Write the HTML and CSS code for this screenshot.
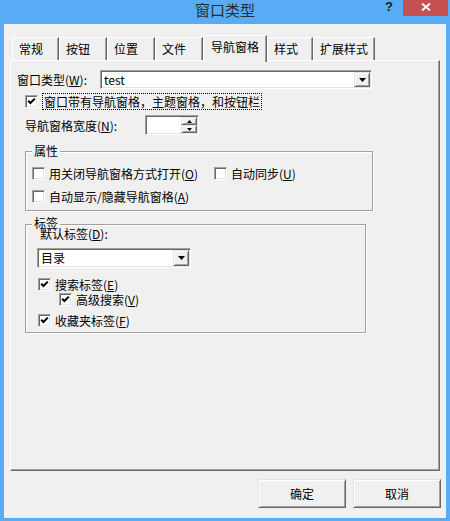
FILE: index.html
```html
<!DOCTYPE html>
<html lang="zh">
<head>
    <meta charset="UTF-8">
    <meta name="viewport" content="width=device-width, initial-scale=1.0">
    <title>窗口类型</title>
    <link rel="stylesheet" href="styles.css">
</head>
<body>

    <div class="window">
        <div class="titlebar">
            <span></span>
            <span class="title">窗口类型</span>
            <div class="caption-buttons">
                <span class="help">?</span>
                <span class="close">
                    <svg width="10" height="8" viewBox="0 0 10 8"><path d="M1 0.5 L9 7.5 M9 0.5 L1 7.5" stroke="#fff" stroke-width="1.8" fill="none"/></svg>
                </span>
            </div>
        </div>

        <div class="client">
            <div class="tabs">
                <div class="tab">常规</div>
                <div class="tab">按钮</div>
                <div class="tab">位置</div>
                <div class="tab">文件</div>
                <div class="tab active">导航窗格</div>
                <div class="tab narrow">样式</div>
                <div class="tab">扩展样式</div>
            </div>

            <div class="page">
                <div class="type-row">
                    <span class="type-label">窗口类型(<u>W</u>):</span>
                    <div class="combo type-combo">
                        <span class="combo-text">test</span>
                        <span class="drop-btn">
                            <svg width="7" height="4" viewBox="0 0 7 4"><polygon points="0,0 7,0 3.5,4" fill="#000"/></svg>
                        </span>
                    </div>
                </div>

                <div class="main-check">
                    <span class="box checked">
                        <svg width="9" height="9" viewBox="0 0 9 9"><polyline points="1.2,3.8 3.4,6 7.8,1.6" stroke="#000" stroke-width="2" fill="none"/></svg>
                    </span>
                    <span class="focus-text">窗口带有导航窗格，主题窗格，和按钮栏</span>
                </div>

                <div class="width-row">
                    <span class="width-label">导航窗格宽度(<u>N</u>):</span>
                    <div class="spin">
                        <span class="spin-btns">
                            <span class="spin-btn">
                                <svg width="5" height="3" viewBox="0 0 5 3"><polygon points="2.5,0 5,3 0,3" fill="#000"/></svg>
                            </span>
                            <span class="spin-btn">
                                <svg width="5" height="3" viewBox="0 0 5 3"><polygon points="0,0 5,0 2.5,3" fill="#000"/></svg>
                            </span>
                        </span>
                    </div>
                </div>

                <div class="group props">
                    <span class="group-title">属性</span>
                    <div class="check-line">
                        <div class="check first-col"><span class="box"></span><span>用关闭导航窗格方式打开(<u>O</u>)</span></div>
                        <div class="check"><span class="box"></span><span>自动同步(<u>U</u>)</span></div>
                    </div>
                    <div class="check-line second">
                        <div class="check"><span class="box"></span><span>自动显示/隐藏导航窗格(<u>A</u>)</span></div>
                    </div>
                </div>

                <div class="group labels">
                    <span class="group-title">标签</span>
                    <div class="default-label">默认标签(<u>D</u>):</div>
                    <div class="combo default-combo">
                        <span class="combo-text">目录</span>
                        <span class="drop-btn">
                            <svg width="7" height="4" viewBox="0 0 7 4"><polygon points="0,0 7,0 3.5,4" fill="#000"/></svg>
                        </span>
                    </div>
                    <div class="check search-check">
                        <span class="box checked"><svg width="9" height="9" viewBox="0 0 9 9"><polyline points="1.2,3.8 3.4,6 7.8,1.6" stroke="#000" stroke-width="2" fill="none"/></svg></span>
                        <span>搜索标签(<u>E</u>)</span>
                    </div>
                    <div class="check sub-check">
                        <span class="box checked"><svg width="9" height="9" viewBox="0 0 9 9"><polyline points="1.2,3.8 3.4,6 7.8,1.6" stroke="#000" stroke-width="2" fill="none"/></svg></span>
                        <span>高级搜索(<u>V</u>)</span>
                    </div>
                    <div class="check fav-check">
                        <span class="box checked"><svg width="9" height="9" viewBox="0 0 9 9"><polyline points="1.2,3.8 3.4,6 7.8,1.6" stroke="#000" stroke-width="2" fill="none"/></svg></span>
                        <span>收藏夹标签(<u>F</u>)</span>
                    </div>
                </div>
            </div>

            <div class="actions">
                <div class="btn">确定</div>
                <div class="btn">取消</div>
            </div>
        </div>
    </div>

</body>
</html>
```

FILE: styles.css
```css
body {
    margin: 0;
    width: 450px;
    height: 521px;
    overflow: hidden;
    background-color: #58acf6;
    font-family: "Noto Sans CJK SC", "Liberation Sans", sans-serif;
    font-size: 12px;
    color: #000;
}

u {
    text-decoration: underline;
    text-underline-offset: 1px;
}

.window {
    height: 521px;
    display: flex;
    flex-direction: column;
}

/* 标题栏 */
.titlebar {
    height: 24px;
    display: grid;
    grid-template-columns: 1fr auto 1fr;
}

    .titlebar .title {
        font-size: 15px;
        line-height: 20px;
        color: #2b2b2b;
    }

.caption-buttons {
    display: flex;
    justify-content: flex-end;
    align-items: flex-start;
    margin-right: 2px;
}

    .caption-buttons .help {
        font-family: "Liberation Sans", sans-serif;
        font-weight: bold;
        font-size: 13px;
        line-height: 14px;
        color: #1a1a1a;
        margin-right: 10px;
    }

    .caption-buttons .close {
        width: 45px;
        height: 16px;
        background-color: #c75050;
        display: flex;
        align-items: center;
        justify-content: center;
        padding-bottom: 3px;
        box-sizing: border-box;
    }

.client {
    flex: 1;
    margin: 0 4px 3px;
    padding: 11px 0 0 6px;
    background-color: #f0f0f0;
}

/* 选项卡 */
.tabs {
    height: 25px;
    margin-left: 2px;
    display: flex;
    align-items: flex-end;
}

.tab {
    height: 23px;
    min-width: 48px;
    box-sizing: border-box;
    padding: 0 6px;
    line-height: 21px;
    border: 1px solid;
    border-bottom: 0;
    border-color: #fff #696969 #fff #fff;
    box-shadow: inset -1px 0 #a0a0a0;
}

    .tab:first-child {
        min-width: 47px;
    }

    .tab.narrow {
        min-width: 46px;
    }

    .tab.active {
        height: 27px;
        margin-bottom: -2px;
        padding: 0 7px;
        line-height: 22px;
        position: relative;
        z-index: 1;
        background-color: #f0f0f0;
    }

.page {
    width: 430px;
    height: 411px;
    box-sizing: border-box;
    border: 1px solid;
    border-color: #fff #696969 #696969 #fff;
    box-shadow: inset -1px -1px #a0a0a0;
}

/* 凹陷输入框 */
.combo,
.spin {
    box-sizing: border-box;
    border: 1px solid;
    border-color: #a0a0a0 #fff #fff #a0a0a0;
    box-shadow: inset 1px 1px #696969, inset -1px -1px #e3e3e3;
    background-color: #fff;
    padding: 1px;
    display: flex;
    align-items: center;
}

.combo-text {
    flex: 1;
    padding-left: 2px;
    line-height: 14px;
}

.drop-btn,
.spin-btn {
    box-sizing: border-box;
    border: 1px solid;
    border-color: #e3e3e3 #696969 #696969 #e3e3e3;
    box-shadow: inset 1px 1px #fff, inset -1px -1px #a0a0a0;
    background-color: #f0f0f0;
    display: flex;
    align-items: center;
    justify-content: center;
}

.drop-btn {
    width: 16px;
    align-self: stretch;
}

.type-row {
    margin: 9px 0 0 6px;
    height: 19px;
    display: flex;
    align-items: center;
}

.type-label {
    width: 83px;
}

.type-combo {
    width: 272px;
    height: 19px;
}

.main-check {
    margin: 4px 0 0 14px;
    height: 17px;
    display: flex;
    align-items: center;
}

.focus-text {
    margin-left: 4px;
    padding: 0 1px;
    line-height: 15px;
    border: 1px dotted #000;
}

.width-row {
    margin: 5px 0 0 14px;
    height: 20px;
    display: flex;
    align-items: center;
}

.width-label {
    width: 120px;
}

.spin {
    width: 54px;
    height: 20px;
    justify-content: flex-end;
}

.spin-btns {
    width: 16px;
    height: 16px;
    display: flex;
    flex-direction: column;
}

.spin-btn {
    height: 8px;
}

/* 复选框 */
.box {
    width: 13px;
    height: 13px;
    flex: none;
    box-sizing: border-box;
    border: 1px solid;
    border-color: #a0a0a0 #fff #fff #a0a0a0;
    box-shadow: inset 1px 1px #696969, inset -1px -1px #e3e3e3;
    background-color: #fff;
    display: flex;
    align-items: center;
    justify-content: center;
}

.check {
    height: 13px;
    line-height: 13px;
    display: flex;
    align-items: center;
    gap: 4px;
    white-space: nowrap;
}

/* 分组框 */
.group {
    position: relative;
    box-sizing: border-box;
    border: 1px solid #a0a0a0;
    box-shadow: inset 1px 1px #fff, 1px 1px #fff;
}

.group-title {
    position: absolute;
    left: 6px;
    padding: 0 2px;
    line-height: 12px;
    background-color: #f0f0f0;
}

.props {
    margin: 16px 0 0 14px;
    width: 348px;
    padding: 15px 0 7px 6px;
}

    .props .group-title {
        top: -7px;
    }

.check-line {
    display: flex;
}

    .check-line.second {
        margin-top: 10px;
    }

.first-col {
    width: 182px;
}

.labels {
    margin: 13px 0 0 14px;
    width: 341px;
    padding: 2px 0 5px 11px;
}

    .labels .group-title {
        top: -8px;
    }

.default-label {
    position: relative;
    margin-left: 3px;
    line-height: 14px;
}

.default-combo {
    margin-top: 7px;
    width: 154px;
    height: 20px;
}

.search-check {
    margin: 10px 0 0 1px;
}

.sub-check {
    margin: 2px 0 0 22px;
}

.fav-check {
    margin: 8px 0 0 1px;
}

/* 底部按钮 */
.actions {
    margin: 8px 5px 0 0;
    display: flex;
    justify-content: flex-end;
    gap: 7px;
}

.btn {
    width: 88px;
    height: 29px;
    box-sizing: border-box;
    border: 1px solid;
    border-color: #e3e3e3 #696969 #696969 #e3e3e3;
    box-shadow: inset 1px 1px #fff, inset -1px -1px #a0a0a0;
    display: flex;
    align-items: center;
    justify-content: center;
}
```
